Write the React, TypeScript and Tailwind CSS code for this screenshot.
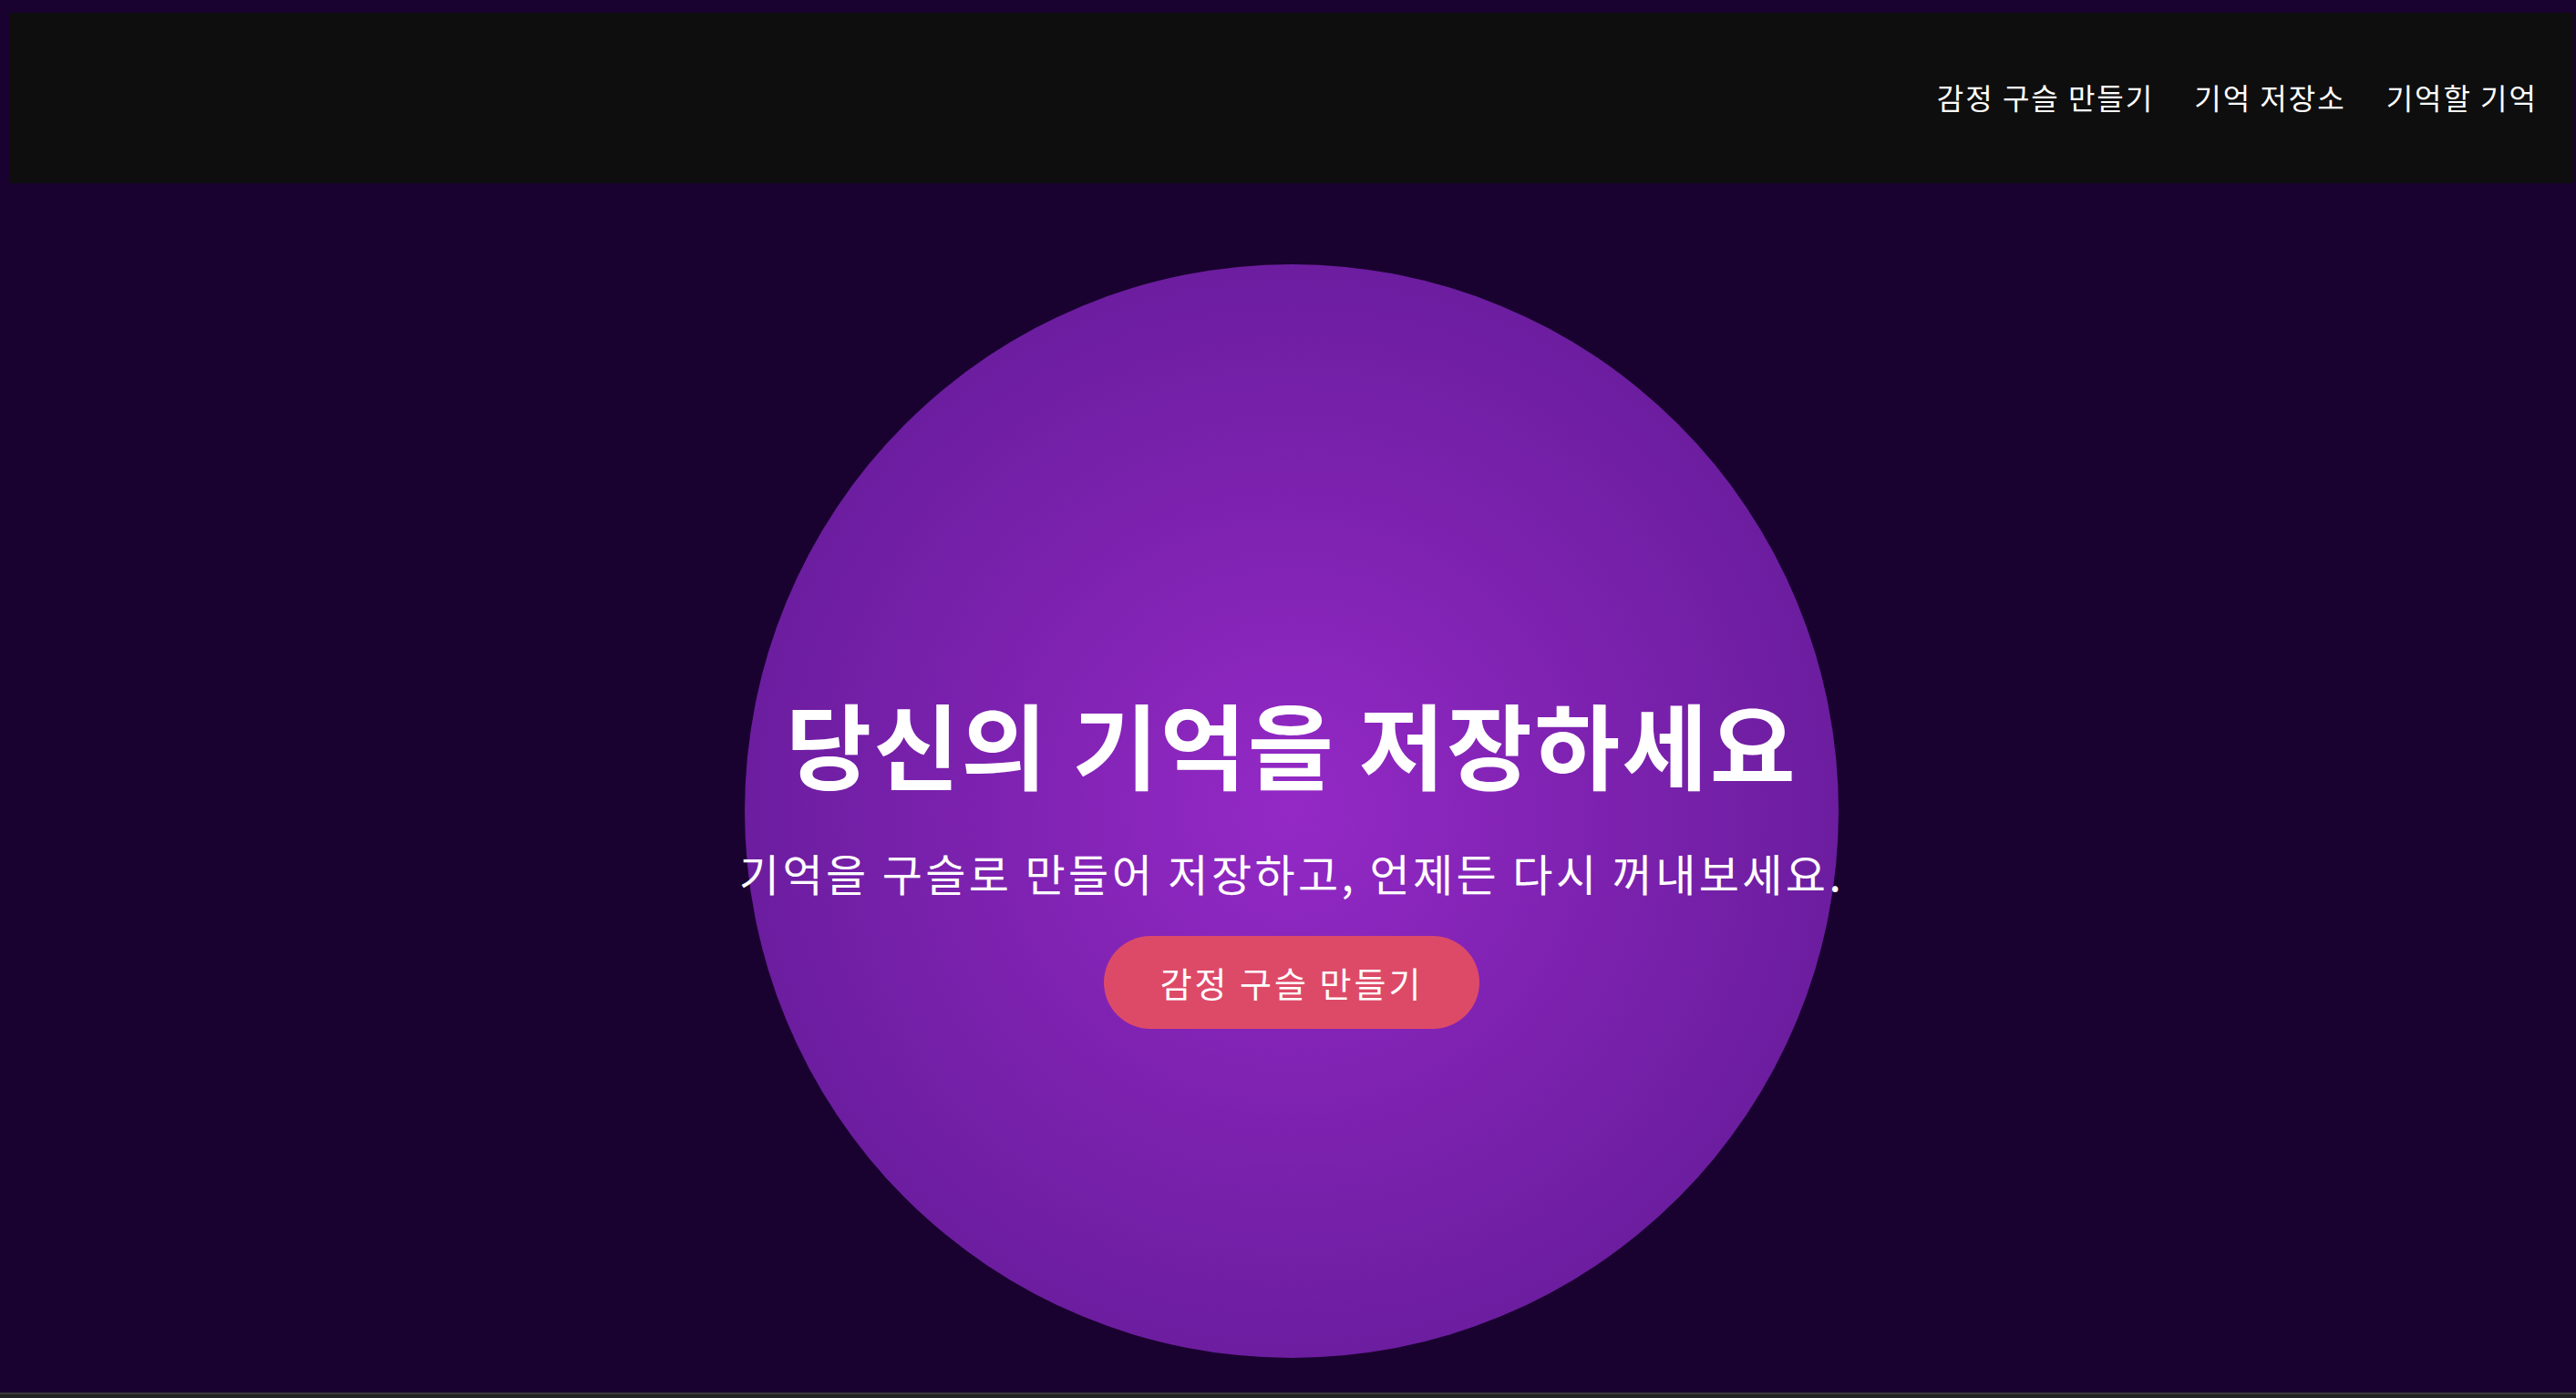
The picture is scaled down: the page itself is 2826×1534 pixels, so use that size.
export default function App() {
  const font = { fontFamily: '"Noto Sans CJK KR", "Noto Sans", sans-serif' }

  return (
    <div className="h-[1534px] w-full flex flex-col bg-[#1a0230] text-white overflow-hidden" style={font}>
      <div className="flex-1 flex flex-col pt-[14px] pl-[10px] pr-[2px]">
        {/* Top nav */}
        <header className="h-[187px] bg-[#0e0e0e] flex items-center justify-end pr-[40px] pb-[3px]">
          <nav className="flex items-center gap-[44px] text-[32px] leading-none tracking-[2px]">
            <a href="#">감정 구슬 만들기</a>
            <a href="#">기억 저장소</a>
            <a href="#">기억할 기억</a>
          </nav>
        </header>

        {/* Hero orb */}
        <main className="flex-1 flex justify-center pt-[89px]">
          <div className="w-[1200px] h-[1200px] rounded-full bg-[radial-gradient(circle_at_center,#9429c6_0%,#7a21ad_45%,#5c1990_100%)] flex flex-col items-center pt-[474px]">
            <h1 className="text-[102px] font-bold leading-none tracking-[2.4px] whitespace-nowrap">당신의 기억을 저장하세요</h1>
            <p className="mt-[67px] text-[48px] leading-none tracking-[3.4px] whitespace-nowrap">
              기억을 구슬로 만들어 저장하고, 언제든 다시 꺼내보세요.
            </p>
            <button className="mt-[46px] px-[62px] py-[32px] rounded-full bg-[#dd4a68] text-[38px] leading-none tracking-[3px] text-white">
              감정 구슬 만들기
            </button>
          </div>
        </main>
      </div>
      <div className="h-[6px] bg-[#232323] border-t-2 border-[#3c3c3c]" />
    </div>
  )
}
